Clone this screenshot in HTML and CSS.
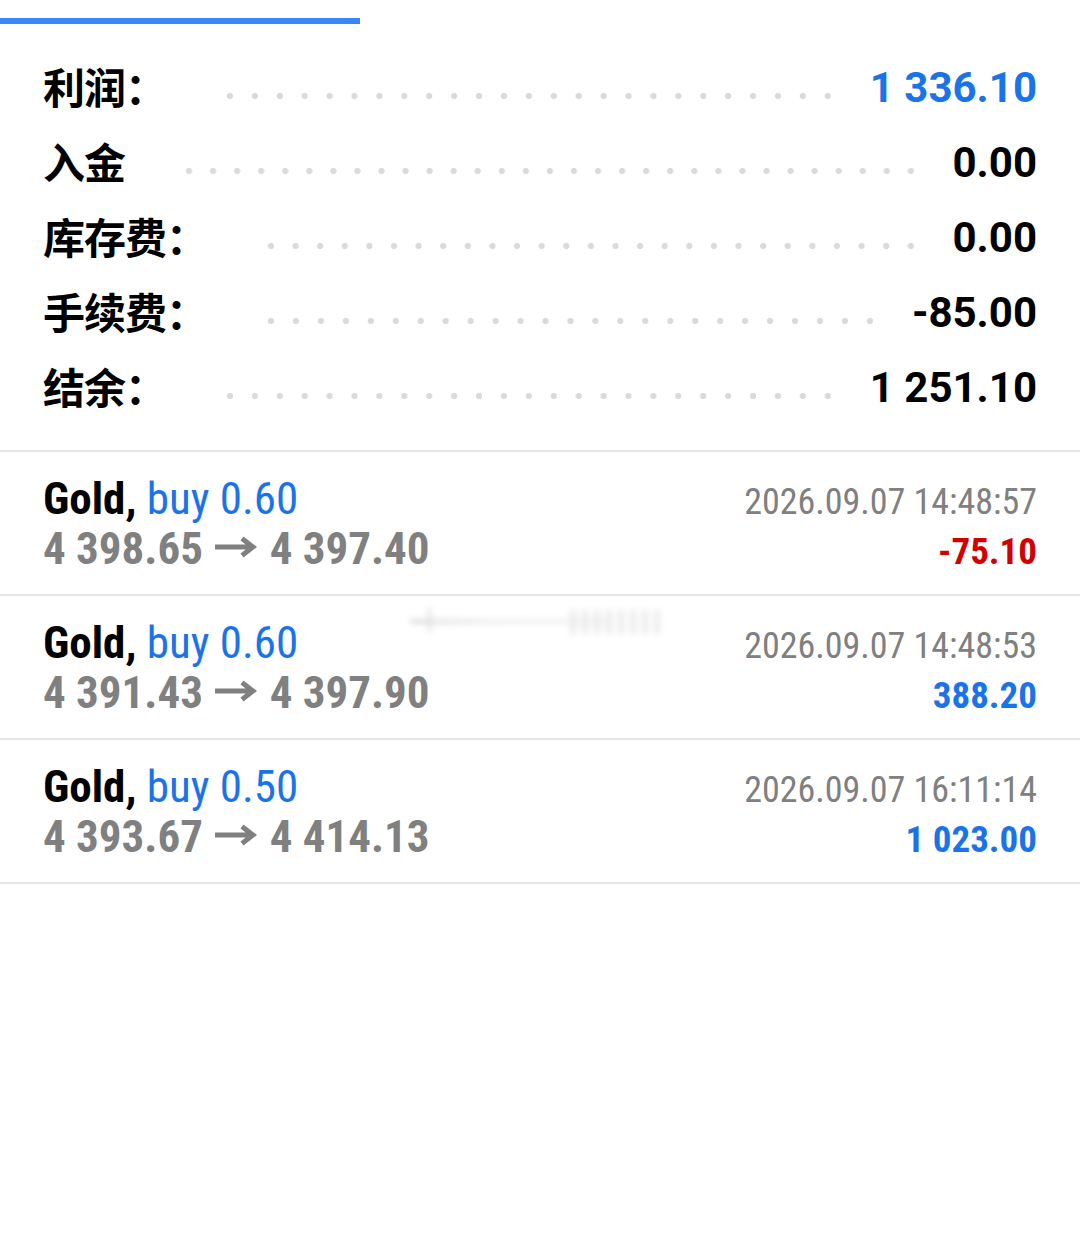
FILE: index.html
```html
<!DOCTYPE html>
<html lang="zh-CN">
<head>
<meta charset="utf-8">
<title>History</title>
<link rel="stylesheet" href="styles.css">
</head>
<body>
<div class="tab-indicator"></div>
<section class="summary">
  <div class="sum-row"><span class="sum-label">利润：</span><span class="leader"></span><span class="sum-value blue">1 336.10</span></div>
  <div class="sum-row"><span class="sum-label">入金</span><span class="leader"></span><span class="sum-value">0.00</span></div>
  <div class="sum-row"><span class="sum-label">库存费：</span><span class="leader"></span><span class="sum-value">0.00</span></div>
  <div class="sum-row"><span class="sum-label">手续费：</span><span class="leader"></span><span class="sum-value">-85.00</span></div>
  <div class="sum-row"><span class="sum-label">结余：</span><span class="leader"></span><span class="sum-value">1 251.10</span></div>
</section>
<section class="deals">
  <div class="deal">
    <div class="deal-left">
      <div class="deal-title"><span class="sym">Gold,</span> <span class="type">buy 0.60</span></div>
      <div class="deal-prices">4 398.65 <svg class="arrow" viewBox="0 0 42 22" width="42" height="22"><path d="M0 11H37M27 2.5L38 11L27 19.5" fill="none" stroke="#808080" stroke-width="5"/></svg> 4 397.40</div>
    </div>
    <div class="deal-right">
      <div class="deal-time">2026.09.07 14:48:57</div>
      <div class="deal-profit red">-75.10</div>
    </div>
  </div>
  <div class="deal">
    <div class="watermark"><span class="wm-line"></span><span class="wm-tick"></span><span class="wm-blob"></span></div>
    <div class="deal-left">
      <div class="deal-title"><span class="sym">Gold,</span> <span class="type">buy 0.60</span></div>
      <div class="deal-prices">4 391.43 <svg class="arrow" viewBox="0 0 42 22" width="42" height="22"><path d="M0 11H37M27 2.5L38 11L27 19.5" fill="none" stroke="#808080" stroke-width="5"/></svg> 4 397.90</div>
    </div>
    <div class="deal-right">
      <div class="deal-time">2026.09.07 14:48:53</div>
      <div class="deal-profit blue">388.20</div>
    </div>
  </div>
  <div class="deal">
    <div class="deal-left">
      <div class="deal-title"><span class="sym">Gold,</span> <span class="type">buy 0.50</span></div>
      <div class="deal-prices">4 393.67 <svg class="arrow" viewBox="0 0 42 22" width="42" height="22"><path d="M0 11H37M27 2.5L38 11L27 19.5" fill="none" stroke="#808080" stroke-width="5"/></svg> 4 414.13</div>
    </div>
    <div class="deal-right">
      <div class="deal-time">2026.09.07 16:11:14</div>
      <div class="deal-profit blue">1 023.00</div>
    </div>
  </div>
</section>
</body>
</html>
```
FILE: styles.css
```css
html, body {
  margin: 0;
  padding: 0;
  background: #ffffff;
}
body {
  width: 1080px;
  height: 1240px;
  overflow: hidden;
  font-family: Roboto, "Noto Sans CJK SC", sans-serif;
  color: #000;
}
.tab-indicator {
  width: 360px;
  height: 6px;
  margin-top: 18px;
  background: #3b86f6;
}
.summary {
  padding: 26px 43px 25px 43px;
  border-bottom: 2px solid #e6e6e6;
}
.sum-row {
  display: flex;
  align-items: center;
  height: 75px;
}
.sum-label {
  font-family: "Noto Sans CJK SC", sans-serif;
  font-weight: 700;
  font-size: 42px;
  line-height: 75px;
  margin-top: -4px;
  letter-spacing: -1px;
  white-space: nowrap;
}
.leader {
  flex: 1;
  height: 6px;
  margin: 16px 30px 0 52px;
  background-image: radial-gradient(circle at 12px 3px, #dadada 0, #dadada 2.8px, rgba(218,218,218,0) 3.4px);
  background-size: 24px 6px;
  background-repeat: space no-repeat;
}
.sum-value {
  font-family: Roboto, sans-serif;
  font-weight: 700;
  font-size: 42px;
  line-height: 75px;
  white-space: nowrap;
}
.blue { color: #1a73e8; }
.red { color: #d40000; }
.deal {
  position: relative;
  display: flex;
  justify-content: space-between;
  align-items: baseline;
  height: 142px;
  box-sizing: content-box;
  padding: 0 43px 0 43px;
  border-bottom: 2px solid #e6e6e6;
  font-family: "Roboto Condensed", Roboto, sans-serif;
}
.deal-left, .deal-right {
  padding-top: 22px;
}
.deal-left {
  font-size: 45px;
  line-height: 50px;
  white-space: nowrap;
}
.deal-right {
  line-height: 50px;
  text-align: right;
  white-space: nowrap;
}
.sym {
  font-weight: 700;
  color: #000;
}
.type {
  color: #1a73e8;
}
.deal-prices {
  font-weight: 700;
  color: #808080;
}
.arrow {
  vertical-align: 6px;
  margin: 0 2px;
}
.deal-time {
  font-size: 36px;
  color: #808080;
}
.deal-profit {
  font-size: 37px;
  font-weight: 700;
}
.watermark {
  position: absolute;
  left: 410px;
  top: 8px;
  width: 258px;
  height: 34px;
  filter: blur(3px);
  opacity: 0.4;
}
.wm-line {
  position: absolute;
  left: 0;
  top: 16px;
  width: 200px;
  height: 3px;
  background: linear-gradient(to right, #777, #bbb 40%, #ccc);
}
.wm-tick {
  position: absolute;
  left: 18px;
  top: 4px;
  width: 3px;
  height: 24px;
  background: #aaa;
}
.wm-blob {
  position: absolute;
  left: 160px;
  top: 6px;
  width: 95px;
  height: 24px;
  background: repeating-linear-gradient(to right, #ccc 0 6px, transparent 6px 12px);
}
```
